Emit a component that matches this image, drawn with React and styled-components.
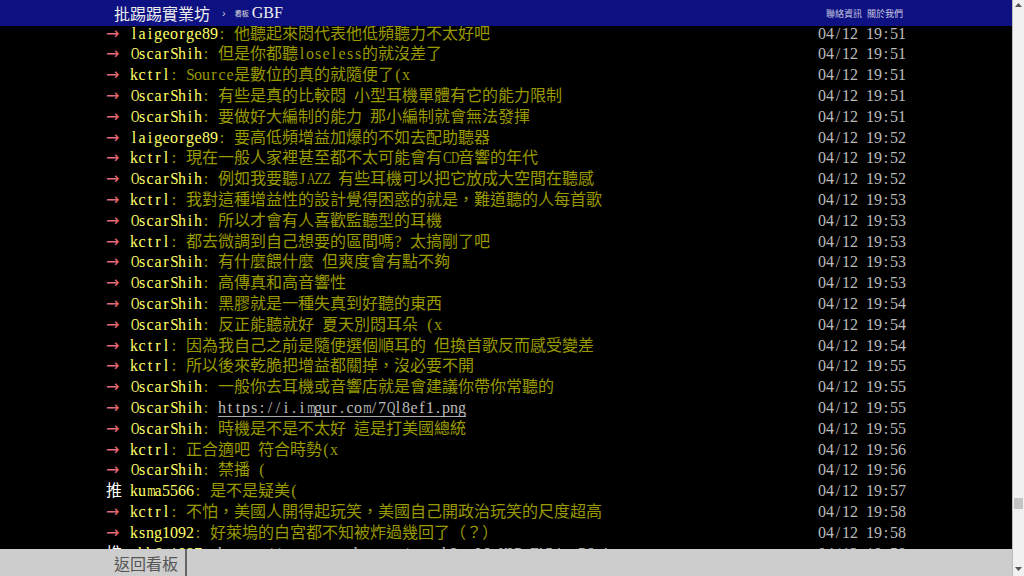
import React from 'react';
import styled, { createGlobalStyle } from 'styled-components';

const GlobalStyle = createGlobalStyle`
  html, body { margin: 0; padding: 0; background: #000; overflow: hidden; }
  body { font-family: "Liberation Serif", "Noto Sans CJK TC", serif; }
`;

const Screen = styled.div`
  display: flex;
  width: 1024px;
  height: 576px;
  background: #000;
`;

const Page = styled.div`
  flex: 1;
  min-width: 0;
  display: flex;
  flex-direction: column;
`;

const Topbar = styled.header`
  flex: none;
  height: 26px;
  background: #0e1182;
`;

const TopInner = styled.div`
  width: 800px;
  height: 100%;
  margin: 0 auto;
  box-sizing: border-box;
  padding: 0 3px 0 8px;
  display: flex;
  align-items: center;
  color: #e6e6e6;
`;

const Logo = styled.span`
  font-family: "Noto Sans CJK TC", sans-serif;
  font-size: 16px;
  line-height: 1;
  color: #ececec;
`;

const Crumb = styled.span`
  font-family: "Liberation Sans", sans-serif;
  font-size: 11px;
  color: #c8c8d8;
  margin: 0 9px 0 12px;
`;

const BoardLabel = styled.span`
  font-family: "Noto Sans CJK TC", sans-serif;
  font-size: 7px;
  color: #e0e0e0;
  margin-right: 3px;
`;

const BoardName = styled.span`
  font-family: "Liberation Serif", serif;
  font-size: 16px;
  color: #f0f0f0;
`;

const TopLinks = styled.nav`
  margin-left: auto;
  display: flex;
  gap: 5px;
`;

const TopLink = styled.span`
  font-family: "Noto Sans CJK TC", sans-serif;
  font-size: 9px;
  color: #c8c8e0;
`;

const Viewport = styled.main`
  flex: 1;
  min-height: 0;
  overflow: hidden;
`;

const List = styled.div`
  width: 800px;
  margin: -2.4px auto 0;
`;

const Row = styled.div`
  display: flex;
  justify-content: space-between;
  height: 20.8px;
  line-height: 20.8px;
  font-size: 16px;
  white-space: nowrap;
`;

const Left = styled.div`
  flex: none;
`;

const Tag = styled.span`
  display: inline-block;
  width: 24px;
  font-family: ${p => (p.$push ? '"Noto Sans CJK TC", sans-serif' : '"DejaVu Sans", sans-serif')};
  line-height: 1;
  color: ${p => (p.$push ? '#ffffff' : '#e86a78')};
`;

const UserId = styled.span`
  color: #ffff66;
`;

const Content = styled.span`
  color: #999900;
`;

const Link = styled.span`
  display: inline-block;
  line-height: 16px;
  color: #bbbbbb;
  border-bottom: 1px solid #aaaaaa;
`;

const Time = styled.span`
  flex: none;
  color: #bbbbbb;
`;

const Half = styled.span`
  display: inline-block;
  width: 8px;
  text-align: center;
  transform: scaleX(${p => p.$scale});
`;

const Wide = styled.span`
  font-family: "Noto Sans CJK TC", sans-serif;
  line-height: 1;
`;

const Bottombar = styled.footer`
  flex: none;
  height: 27px;
  background: #cdcdcd;
`;

const BottomInner = styled.div`
  width: 800px;
  height: 100%;
  margin: 0 auto;
  display: flex;
  align-items: stretch;
`;

const BackButton = styled.span`
  display: flex;
  align-items: center;
  padding: 0 7px 0 8px;
  border-right: 2px solid #666666;
  font-family: "Noto Sans CJK TC", sans-serif;
  font-size: 16px;
  color: #555555;
`;

const Scrollbar = styled.aside`
  flex: none;
  width: 11px;
  border-left: 1px solid #bdbdbd;
  background: #f1f1f1;
  position: relative;
  display: flex;
  flex-direction: column;
  justify-content: space-between;
  align-items: center;
  padding: 3px 0 5px;
  box-sizing: content-box;
  height: 568px;
`;

const Thumb = styled.div`
  position: absolute;
  left: 1px;
  right: 1px;
  top: 498px;
  height: 11px;
  background: #c4c4c4;
`;

/* advance widths (per 1000 em) of Liberation Serif glyphs wider than a half cell */
const latinWidths = {
  m: 778, w: 722, M: 889, W: 944, O: 722, Q: 722, G: 722, D: 722, H: 722,
  N: 722, A: 722, U: 722, K: 722, X: 722, V: 722, Y: 722, C: 667, B: 667,
  R: 667, T: 611, E: 611, Z: 611, L: 611, P: 556, S: 556, F: 556, '%': 833,
  '@': 921, '&': 778,
};

const cellScale = ch => {
  const w = latinWidths[ch];
  return w && w > 520 ? +(520 / w).toFixed(3) : 1;
};

const isWide = ch => ch.codePointAt(0) >= 0x2e80;

function Mono({ text }) {
  const parts = [];
  let buf = '';
  const flush = key => {
    if (buf) {
      parts.push(<Wide key={'w' + key}>{buf}</Wide>);
      buf = '';
    }
  };
  Array.from(text).forEach((ch, i) => {
    if (isWide(ch)) {
      buf += ch;
    } else {
      flush(i);
      parts.push(<Half key={i} $scale={cellScale(ch)}>{ch}</Half>);
    }
  });
  flush('end');
  return <>{parts}</>;
}

const pushes = [
  ['→', 'laigeorge89', '他聽起來悶代表他低頻聽力不太好吧', '04/12 19:51'],
  ['→', 'OscarShih', '但是你都聽loseless的就沒差了', '04/12 19:51'],
  ['→', 'kctrl', 'Source是數位的真的就隨便了(x', '04/12 19:51'],
  ['→', 'OscarShih', '有些是真的比較悶 小型耳機單體有它的能力限制', '04/12 19:51'],
  ['→', 'OscarShih', '要做好大編制的能力 那小編制就會無法發揮', '04/12 19:51'],
  ['→', 'laigeorge89', '要高低頻增益加爆的不如去配助聽器', '04/12 19:52'],
  ['→', 'kctrl', '現在一般人家裡甚至都不太可能會有CD音響的年代', '04/12 19:52'],
  ['→', 'OscarShih', '例如我要聽JAZZ 有些耳機可以把它放成大空間在聽感', '04/12 19:52'],
  ['→', 'kctrl', '我對這種增益性的設計覺得困惑的就是，難道聽的人每首歌', '04/12 19:53'],
  ['→', 'OscarShih', '所以才會有人喜歡監聽型的耳機', '04/12 19:53'],
  ['→', 'kctrl', '都去微調到自己想要的區間嗎? 太搞剛了吧', '04/12 19:53'],
  ['→', 'OscarShih', '有什麼餵什麼 但爽度會有點不夠', '04/12 19:53'],
  ['→', 'OscarShih', '高傳真和高音響性', '04/12 19:53'],
  ['→', 'OscarShih', '黑膠就是一種失真到好聽的東西', '04/12 19:54'],
  ['→', 'OscarShih', '反正能聽就好 夏天別悶耳朵 (x', '04/12 19:54'],
  ['→', 'kctrl', '因為我自己之前是隨便選個順耳的 但換首歌反而感受變差', '04/12 19:54'],
  ['→', 'kctrl', '所以後來乾脆把增益都關掉，沒必要不開', '04/12 19:55'],
  ['→', 'OscarShih', '一般你去耳機或音響店就是會建議你帶你常聽的', '04/12 19:55'],
  ['→', 'OscarShih', { url: 'https://i.imgur.com/7Ql8ef1.png' }, '04/12 19:55'],
  ['→', 'OscarShih', '時機是不是不太好 這是打美國總統', '04/12 19:55'],
  ['→', 'kctrl', '正合適吧 符合時勢(x', '04/12 19:56'],
  ['→', 'OscarShih', '禁播 (', '04/12 19:56'],
  ['推', 'kuma5566', '是不是疑美(', '04/12 19:57'],
  ['→', 'kctrl', '不怕，美國人開得起玩笑，美國自己開政治玩笑的尺度超高', '04/12 19:58'],
  ['→', 'ksng1092', '好萊塢的白宮都不知被炸過幾回了（？）', '04/12 19:58'],
  ['推', 'ahh6s1987', { url: 'https://www.youtube.com/watch?v=IQ-U8P-FWIAe_P6zi' }, '04/12 19:58'],
];

function PushRow({ tag, user, content, time }) {
  return (
    <Row>
      <Left>
        <Tag $push={tag === '推'}>{tag}</Tag>
        <UserId><Mono text={user} /></UserId>
        <Content>
          <Mono text=": " />
          {typeof content === 'string' ? (
            <Mono text={content} />
          ) : (
            <Link><Mono text={content.url} /></Link>
          )}
        </Content>
      </Left>
      <Time><Mono text={time} /></Time>
    </Row>
  );
}

export default function App() {
  return (
    <>
      <GlobalStyle />
      <Screen>
        <Page>
          <Topbar>
            <TopInner>
              <Logo>批踢踢實業坊</Logo>
              <Crumb>›</Crumb>
              <BoardLabel>看板</BoardLabel>
              <BoardName>GBF</BoardName>
              <TopLinks>
                <TopLink>聯絡資訊</TopLink>
                <TopLink>關於我們</TopLink>
              </TopLinks>
            </TopInner>
          </Topbar>
          <Viewport>
            <List>
              {pushes.map(([tag, user, content, time], i) => (
                <PushRow key={i} tag={tag} user={user} content={content} time={time} />
              ))}
            </List>
          </Viewport>
          <Bottombar>
            <BottomInner>
              <BackButton>返回看板</BackButton>
            </BottomInner>
          </Bottombar>
        </Page>
        <Scrollbar>
          <svg width="7" height="4" viewBox="0 0 7 4"><polygon points="0,4 3.5,0 7,4" fill="#555" /></svg>
          <Thumb />
          <svg width="7" height="4" viewBox="0 0 7 4"><polygon points="0,0 7,0 3.5,4" fill="#555" /></svg>
        </Scrollbar>
      </Screen>
    </>
  );
}
